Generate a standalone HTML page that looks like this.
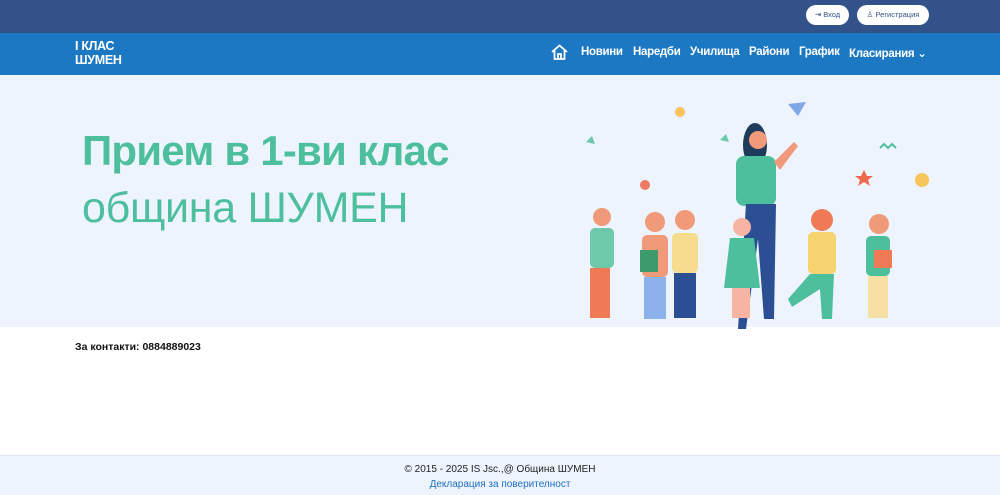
<!DOCTYPE html>
<html><head><meta charset="utf-8"><style>
*{margin:0;padding:0;box-sizing:border-box}
body{width:1000px;height:495px;overflow:hidden;font-family:"Liberation Sans","DejaVu Sans",sans-serif;background:#fff;position:relative}
.top{position:absolute;left:0;top:0;width:1000px;height:33px;background:#34528a}
.btn{position:absolute;top:5px;height:20px;background:#fff;border-radius:10px;font-size:7.5px;color:#34528a;line-height:20px;text-align:center}
.nav{position:absolute;left:0;top:33px;width:1000px;height:42px;background:#1d78c3;color:#fff}
.logo{position:absolute;left:75px;top:6px;font-weight:bold;font-size:12.5px;line-height:14px;letter-spacing:-0.3px}
.menu{position:absolute;top:13px;font-size:11.5px;font-weight:bold;letter-spacing:-0.3px}
.hero{position:absolute;left:0;top:75px;width:1000px;height:252px;background:#edf4fd}
.h1{position:absolute;left:82px;top:52px;font-size:42px;font-weight:bold;color:#4dbf9d;letter-spacing:-0.8px}
.h2{position:absolute;left:82px;top:109px;font-size:43px;color:#4dbf9d;letter-spacing:-0.3px}
.contact{position:absolute;left:75px;top:341px;font-size:10.5px;font-weight:bold;color:#111}
.foot{position:absolute;left:0;top:455px;width:1000px;height:40px;background:#eef4fd;border-top:1px solid #dde6f0;text-align:center;font-size:10px}
</style></head><body>
<div class="top">
<div class="btn" style="left:806px;width:43px">⇥ Вход</div>
<div class="btn" style="left:857px;width:72px">♙ Регистрация</div>
</div>
<div class="nav">
<div class="logo">I КЛАС<br>ШУМЕН</div>
<svg style="position:absolute;left:551px;top:11px" width="17" height="16" viewBox="0 0 17 16" fill="none" stroke="#fff" stroke-width="1.8"><path d="M1 8 L8.5 1.5 L16 8 M3.5 6 V15 H13.5 V6 M7 15 V10 H10 V15"/></svg>
<div class="menu" style="left:581px">Новини</div>
<div class="menu" style="left:633px">Наредби</div>
<div class="menu" style="left:690px">Училища</div>
<div class="menu" style="left:749px">Райони</div>
<div class="menu" style="left:799px">График</div>
<div class="menu" style="left:849px">Класирания ⌄</div>
</div>
<div class="hero">
<div class="h1">Прием в 1-ви клас</div>
<div class="h2">община ШУМЕН</div>
<svg style="position:absolute;left:560px;top:15px" width="380" height="240" viewBox="0 0 380 240">
<circle cx="120" cy="22" r="5" fill="#f6c55c"/><circle cx="362" cy="90" r="7" fill="#f6c55c"/>
<path d="M26 52 l6 -6 l3 8z M160 50 l6 -6 l3 8z" fill="#6cc9a9"/>
<path d="M228 14 l18 -2 l-8 14z" fill="#7fa8e6"/>
<path d="M304 80 l3 6 l6 0 l-5 4 l2 6 l-6 -4 l-6 4 l2 -6 l-5 -4 l6 0z" fill="#ef6a4a"/>
<circle cx="85" cy="95" r="5" fill="#ef7a63"/>
<path d="M320 58 l4 -4 l4 4 l4 -4 l4 4" stroke="#4dbf9d" stroke-width="2" fill="none"/>
<ellipse cx="195" cy="55" rx="12" ry="22" fill="#1f3b5c"/>
<circle cx="198" cy="50" r="9" fill="#f09a7a"/>
<rect x="176" y="66" width="40" height="50" rx="8" fill="#4dbf9d"/>
<path d="M186 114 h30 l-2 115 h-10 l-6 -80 l-12 90 h-8z" fill="#2c4f94"/>
<path d="M214 72 l20 -20 l4 4 l-18 24z" fill="#f09a7a"/>
<g>
<circle cx="42" cy="127" r="9" fill="#f09a7a"/><rect x="30" y="138" width="24" height="40" rx="5" fill="#6cc9a9"/><rect x="30" y="178" width="20" height="50" fill="#ef7a55"/>
<circle cx="95" cy="132" r="10" fill="#f09a7a"/><rect x="82" y="145" width="26" height="42" rx="5" fill="#f09a7a"/><rect x="84" y="187" width="22" height="42" fill="#8db1ea"/><rect x="80" y="160" width="18" height="22" fill="#3c9a6d"/>
<circle cx="125" cy="130" r="10" fill="#f09a7a"/><rect x="112" y="143" width="26" height="40" rx="5" fill="#f6dc8e"/><rect x="114" y="183" width="22" height="45" fill="#2c4f94"/>
<circle cx="182" cy="137" r="9" fill="#f7b4a2"/><path d="M170 148 h24 l6 50 h-36z" fill="#4dbf9d"/><rect x="172" y="198" width="18" height="30" fill="#f7b4a2"/>
<circle cx="262" cy="130" r="11" fill="#ef7a55"/><rect x="248" y="142" width="28" height="42" rx="5" fill="#f6d36e"/><path d="M250 184 h24 l-2 45 h-10 l-2 -30 l-28 18 l-4 -8z" fill="#4dbf9d"/>
<circle cx="319" cy="134" r="10" fill="#f09a7a"/><rect x="306" y="146" width="24" height="40" rx="5" fill="#4dbf9d"/><rect x="308" y="186" width="20" height="42" fill="#f6e0a2"/><rect x="314" y="160" width="18" height="18" fill="#ef7a55"/>
</g>
</svg>
</div>
<div class="contact">За контакти: 0884889023</div>
<div class="foot">
<div style="margin-top:8px;color:#222">© 2015 - 2025 IS Jsc.,@ Община ШУМЕН</div>
<div style="margin-top:4px;color:#1d6fc0">Декларация за поверителност</div>
</div>
</body></html>
